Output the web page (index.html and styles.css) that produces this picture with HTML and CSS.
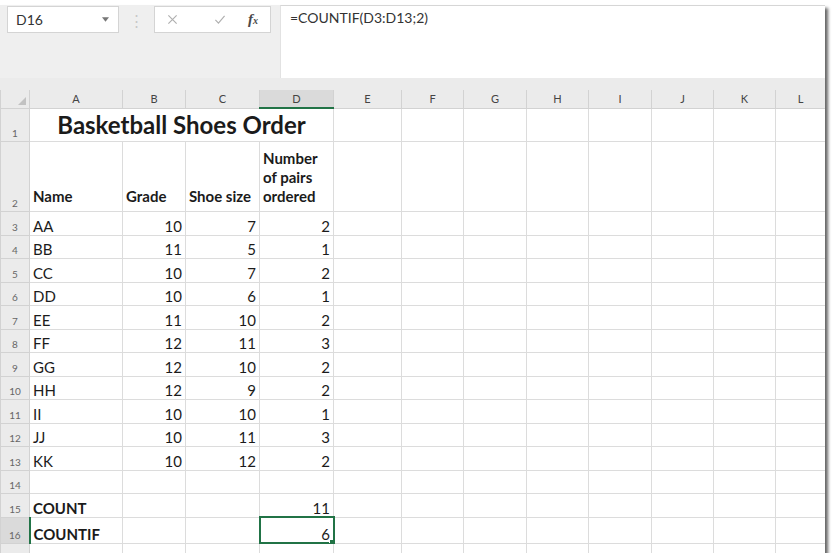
FILE: index.html
```html
<!DOCTYPE html>
<html lang="en">
<head>
<meta charset="UTF-8" />
<title>Basketball Shoes Order</title>
<link rel="stylesheet" href="styles.css">
</head>
<body>

<div class="window">
    <div class="formula-area">
        <div class="name-box">
            <span>D16</span>
            <svg class="caret" viewBox="0 0 8 5"><path d="M0 0h8L4 5z"/></svg>
        </div>
        <div class="grip">⋮</div>
        <div class="fx-tools">
            <svg class="tool cancel" viewBox="0 0 12 12"><path d="M1.5 1.5l9 9M10.5 1.5l-9 9"/></svg>
            <svg class="tool enter" viewBox="0 0 12 12"><path d="M1 6.5l3.3 3.5L11 2"/></svg>
            <span class="fx">f<small>x</small></span>
        </div>
        <div class="formula-input">=COUNTIF(D3:D13;2)</div>
    </div>
    <div class="band"></div>

    <table class="sheet">
        <colgroup>
            <col style="width:29px"><col style="width:93px"><col style="width:63px"><col style="width:74px">
            <col style="width:74px"><col style="width:68px"><col style="width:62px"><col style="width:63px">
            <col style="width:62px"><col style="width:63px"><col style="width:62px"><col style="width:62px">
            <col style="width:50px">
        </colgroup>
        <tr class="col-heads">
            <th class="corner"></th><th>A</th><th>B</th><th>C</th><th class="sel">D</th><th>E</th><th>F</th>
            <th>G</th><th>H</th><th>I</th><th>J</th><th>K</th><th>L</th>
        </tr>
        <tr class="r-title">
            <th>1</th><td colspan="4" class="title">Basketball Shoes Order</td>
            <td></td><td></td><td></td><td></td><td></td><td></td><td></td><td></td>
        </tr>
        <tr class="r-head">
            <th>2</th><td>Name</td><td>Grade</td><td>Shoe size</td><td>Number<br>of pairs<br>ordered</td>
            <td></td><td></td><td></td><td></td><td></td><td></td><td></td><td></td>
        </tr>
        <tr><th>3</th><td>AA</td><td class="num">10</td><td class="num">7</td><td class="num">2</td><td></td><td></td><td></td><td></td><td></td><td></td><td></td><td></td></tr>
        <tr><th>4</th><td>BB</td><td class="num">11</td><td class="num">5</td><td class="num">1</td><td></td><td></td><td></td><td></td><td></td><td></td><td></td><td></td></tr>
        <tr><th>5</th><td>CC</td><td class="num">10</td><td class="num">7</td><td class="num">2</td><td></td><td></td><td></td><td></td><td></td><td></td><td></td><td></td></tr>
        <tr><th>6</th><td>DD</td><td class="num">10</td><td class="num">6</td><td class="num">1</td><td></td><td></td><td></td><td></td><td></td><td></td><td></td><td></td></tr>
        <tr><th>7</th><td>EE</td><td class="num">11</td><td class="num">10</td><td class="num">2</td><td></td><td></td><td></td><td></td><td></td><td></td><td></td><td></td></tr>
        <tr><th>8</th><td>FF</td><td class="num">12</td><td class="num">11</td><td class="num">3</td><td></td><td></td><td></td><td></td><td></td><td></td><td></td><td></td></tr>
        <tr><th>9</th><td>GG</td><td class="num">12</td><td class="num">10</td><td class="num">2</td><td></td><td></td><td></td><td></td><td></td><td></td><td></td><td></td></tr>
        <tr><th>10</th><td>HH</td><td class="num">12</td><td class="num">9</td><td class="num">2</td><td></td><td></td><td></td><td></td><td></td><td></td><td></td><td></td></tr>
        <tr><th>11</th><td>II</td><td class="num">10</td><td class="num">10</td><td class="num">1</td><td></td><td></td><td></td><td></td><td></td><td></td><td></td><td></td></tr>
        <tr><th>12</th><td>JJ</td><td class="num">10</td><td class="num">11</td><td class="num">3</td><td></td><td></td><td></td><td></td><td></td><td></td><td></td><td></td></tr>
        <tr><th>13</th><td>KK</td><td class="num">10</td><td class="num">12</td><td class="num">2</td><td></td><td></td><td></td><td></td><td></td><td></td><td></td><td></td></tr>
        <tr><th>14</th><td></td><td></td><td></td><td></td><td></td><td></td><td></td><td></td><td></td><td></td><td></td><td></td></tr>
        <tr><th>15</th><td class="bold">COUNT</td><td></td><td></td><td class="num">11</td><td></td><td></td><td></td><td></td><td></td><td></td><td></td><td></td></tr>
        <tr class="r-active"><th class="sel">16</th><td class="bold">COUNTIF</td><td></td><td></td><td class="num active">6</td><td></td><td></td><td></td><td></td><td></td><td></td><td></td><td></td></tr>
        <tr class="r-cut"><th>17</th><td></td><td></td><td></td><td></td><td></td><td></td><td></td><td></td><td></td><td></td><td></td><td></td></tr>
    </table>
</div>

</body>
</html>
```

FILE: styles.css
```css
body {
    margin: 0;
    background: #fff;
    font-family: Lato, "Open Sans", sans-serif;
    color: #1b1b1b;
}

.window {
    margin-top: 5px;
    width: 825px;
    height: 548px;
    overflow: hidden;
    background: #fff;
    box-shadow: 3px 3px 3px rgba(0,0,0,0.6);
}

/* formula bar */
.formula-area {
    height: 73px;
    display: flex;
    align-items: flex-start;
    background: #efefef;
    padding-left: 7px;
}

.name-box {
    box-sizing: border-box;
    width: 112px;
    height: 27px;
    margin-top: 1px;
    background: #fff;
    border: 1px solid #d4d4d4;
    display: flex;
    align-items: center;
    justify-content: space-between;
    padding: 0 9px 0 8px;
    font-size: 14px;
    color: #333;
}

.caret {
    width: 7px;
    height: 5px;
    fill: #777;
}

.grip {
    width: 35px;
    text-align: center;
    color: #c8c8c8;
    font-size: 15px;
    margin-top: 6px;
}

.fx-tools {
    box-sizing: border-box;
    width: 117px;
    height: 27px;
    margin-top: 1px;
    background: #fff;
    border: 1px solid #d4d4d4;
    display: flex;
    align-items: center;
    padding: 0 12px;
}

.tool {
    width: 11px;
    height: 11px;
    fill: none;
    stroke: #b0b0b0;
    stroke-width: 1.3;
}

.enter {
    width: 12px;
    margin-left: 36px;
}

.fx {
    margin-left: auto;
    font-family: "Liberation Serif", serif;
    font-style: italic;
    font-weight: bold;
    font-size: 15px;
    color: #4a4a4a;
}

.fx small {
    font-size: 10px;
}

.formula-input {
    flex: 1;
    height: 73px;
    box-sizing: border-box;
    margin-left: 9px;
    background: #fff;
    border-top: 1px solid #d6d6d6;
    border-left: 1px solid #e2e2e2;
    padding: 3px 9px;
    font-size: 14px;
    color: #333;
}

.band {
    height: 12px;
    background: #ebebeb;
}

/* grid */
.sheet {
    border-collapse: collapse;
    table-layout: fixed;
    width: 825px;
    font-size: 15px;
}

.sheet td {
    border: 1px solid #dcdcdc;
    padding: 0 3px;
    height: 22.5px;
    white-space: nowrap;
    overflow: hidden;
    vertical-align: bottom;
    line-height: 18px;
}

.sheet th {
    background: #ebebeb;
    border: 1px solid #d2d2d2;
    font-weight: normal;
    font-size: 10px;
    color: #666;
    padding: 0;
    vertical-align: bottom;
    line-height: 16px;
}

.col-heads th {
    height: 17px;
    font-size: 11px;
    color: #444;
    border-top: none;
    vertical-align: middle;
    line-height: 14px;
}

.col-heads th.sel {
    background: #dadada;
    border-bottom: 2px solid #217346;
}

.corner {
    position: relative;
}

.corner::after {
    content: "";
    position: absolute;
    right: 3px;
    bottom: 3px;
    border-left: 8px solid transparent;
    border-bottom: 8px solid #c2c2c2;
}

.r-title td {
    height: 32px;
}

.sheet td.title {
    overflow: visible;
    font-weight: bold;
    font-size: 24px;
    line-height: 28px;
    text-align: center;
    vertical-align: middle;
}

.r-head td {
    height: 64px;
    font-weight: bold;
    line-height: 19px;
    padding-bottom: 5px;
}

.num {
    text-align: right;
}

.bold {
    font-weight: bold;
}

.r-active th.sel {
    background: #dadada;
    border-right: 2px solid #217346;
}

.r-active td {
    height: 25px;
}

.sheet td.active {
    position: relative;
    outline: 2px solid #217346;
    outline-offset: -1px;
}

.active::after {
    content: "";
    position: absolute;
    right: -3px;
    bottom: -3px;
    width: 5px;
    height: 5px;
    background: #217346;
    border: 1px solid #fff;
}

.r-cut td, .r-cut th {
    height: 20px;
}
```
